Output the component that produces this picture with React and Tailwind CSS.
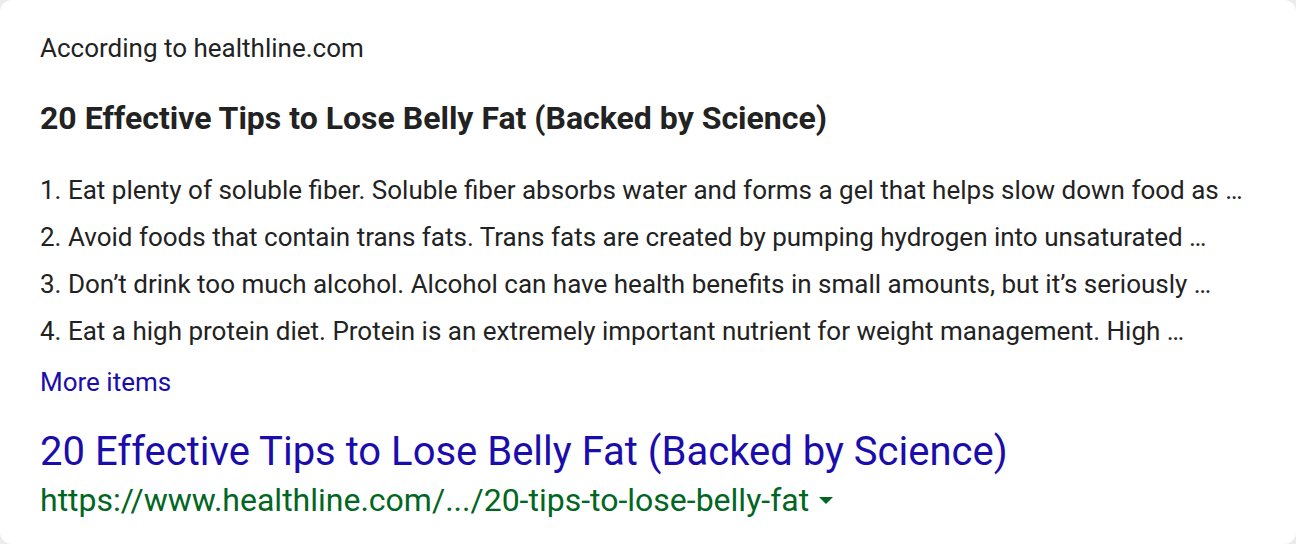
import React from 'react';

const items = [
  '1. Eat plenty of soluble fiber. Soluble fiber absorbs water and forms a gel that helps slow down food as …',
  '2. Avoid foods that contain trans fats. Trans fats are created by pumping hydrogen into unsaturated …',
  '3. Don’t drink too much alcohol. Alcohol can have health benefits in small amounts, but it’s seriously …',
  '4. Eat a high protein diet. Protein is an extremely important nutrient for weight management. High …',
];

const App = () => {
  return (
    <div className="w-[1296px] h-[544px] bg-[#ececec] font-['Roboto',sans-serif]">
      <div className="w-full h-full bg-white rounded-[12px] px-[40px] pt-[32px] text-[#222]">
        {/* Source */}
        <div className="text-[26px] leading-[32px]">According to healthline.com</div>

        {/* Snippet heading */}
        <h2 className="mt-[36px] text-[32px] leading-[36px] font-bold">
          20 Effective Tips to Lose Belly Fat (Backed by Science)
        </h2>

        {/* List */}
        <ul className="mt-[31px]">
          {items.map(text => (
            <li key={text} className="text-[26px] leading-[47px] whitespace-nowrap">{text}</li>
          ))}
        </ul>
        <div className="mt-[4px] text-[26px] leading-[47px] text-[#1a0dab]">More items</div>

        {/* Result link */}
        <div className="mt-[24px] text-[40px] leading-[44px] text-[#1a0dab]">
          20 Effective Tips to Lose Belly Fat (Backed by Science)
        </div>
        <div className="mt-[8px] flex items-center text-[32px] leading-[36px] text-[#006621]">
          <span>https://www.healthline.com/.../20-tips-to-lose-belly-fat</span>
          <span className="ml-[10px] w-0 h-0 border-l-[7px] border-r-[7px] border-t-[7px] border-l-transparent border-r-transparent border-t-[#006621]"></span>
        </div>
      </div>
    </div>
  );
};

export default App;
